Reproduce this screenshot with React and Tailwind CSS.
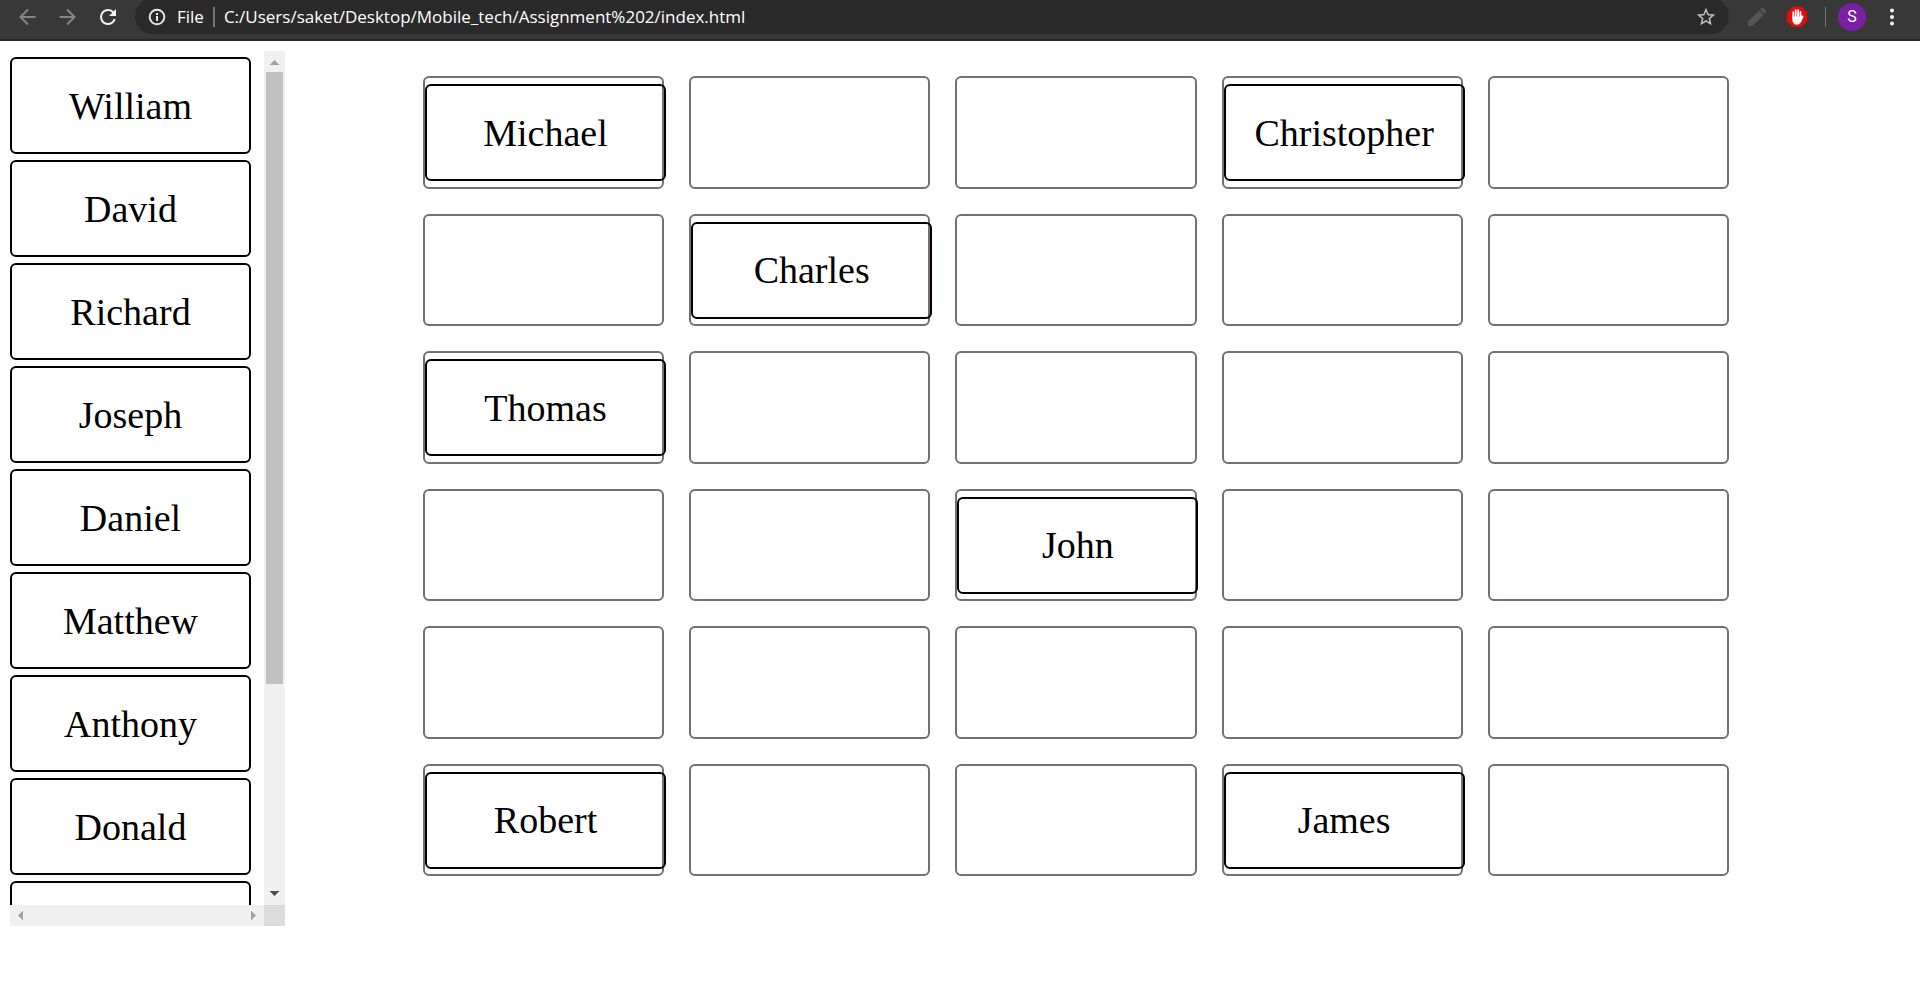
import React from "react";

const waiting = ["William", "David", "Richard", "Joseph", "Daniel", "Matthew", "Anthony", "Donald", ""];

const seats = [
  ["Michael", null, null, "Christopher", null],
  [null, "Charles", null, null, null],
  ["Thomas", null, null, null, null],
  [null, null, "John", null, null],
  [null, null, null, null, null],
  ["Robert", null, null, "James", null],
];

function NameCard({ name }) {
  return (
    <div
      draggable
      className="flex h-[97px] w-[241px] shrink-0 cursor-grab items-center justify-center rounded-md border-2 border-black text-[38px] leading-10 text-black"
    >
      {name}
    </div>
  );
}

function Arrow({ points, fill }) {
  return (
    <svg viewBox="0 0 21 21" className="size-[21px]" aria-hidden="true" shapeRendering="crispEdges">
      <polygon points={points} fill={fill} />
    </svg>
  );
}

function Toolbar() {
  return (
    <header className="flex h-[41px] shrink-0 items-start overflow-hidden border-b-2 border-[#272727] bg-[#383838] font-['Open_Sans',sans-serif] text-white">
      <nav className="flex h-[34px] w-[135px] shrink-0 items-center gap-4 pl-4">
        <button type="button" aria-label="Back" className="size-6">
          <svg viewBox="0 0 24 24" className="size-6" fill="none" stroke="#858585" strokeWidth="2">
            <path d="M19.5 12H5M12 4.5 4.5 12l7.5 7.5" />
          </svg>
        </button>
        <button type="button" aria-label="Forward" className="size-6">
          <svg viewBox="0 0 24 24" className="size-6" fill="none" stroke="#858585" strokeWidth="2">
            <path d="M3.5 12H18M11 4.5l7.5 7.5-7.5 7.5" />
          </svg>
        </button>
        <button type="button" aria-label="Reload" className="size-6">
          <svg viewBox="0 0 24 24" className="size-6" fill="#f1f1f1">
            <path d="M17.65 6.35A7.96 7.96 0 0 0 12 4a8 8 0 1 0 7.73 10h-2.08A6 6 0 1 1 12 6c1.66 0 3.14.69 4.22 1.78L13 11h7V4l-2.35 2.35z" />
          </svg>
        </button>
      </nav>

      <div className="-mt-0.5 flex h-9 min-w-0 flex-1 items-center rounded-full bg-[#2a2a2a] px-3 pt-0.5">
        <button type="button" aria-label="Page information" className="size-5">
          <svg viewBox="0 0 20 20" className="size-5" fill="none" stroke="#e8e8e8" strokeWidth="2">
            <circle cx="10" cy="10" r="7.3" />
            <path d="M10 9v5M10 6v2" />
          </svg>
        </button>
        <span className="ml-[10px] text-[17px] leading-5">File</span>
        <span className="mx-[9px] h-5 w-0.5 bg-[#757575]" />
        <input
          type="text"
          aria-label="Address"
          defaultValue="C:/Users/saket/Desktop/Mobile_tech/Assignment%202/index.html"
          className="min-w-0 flex-1 bg-transparent text-[17px] leading-5 text-white outline-none"
        />
        <button type="button" aria-label="Bookmark this page" className="size-[22px]">
          <svg viewBox="0 0 24 24" className="size-[22px]" fill="#c4c4c4">
            <path d="M22 9.24l-7.19-.62L12 2 9.19 8.63 2 9.24l5.46 4.73L5.82 21 12 17.27 18.18 21l-1.63-7.03L22 9.24zM12 15.4l-3.76 2.27 1-4.28-3.32-2.88 4.38-.38L12 6.1l1.71 4.04 4.38.38-3.32 2.88 1 4.28L12 15.4z" />
          </svg>
        </button>
      </div>

      <div className="flex h-[34px] w-[191px] shrink-0 items-center pl-4">
        <button type="button" aria-label="Pen extension" className="size-6">
          <svg viewBox="0 0 24 24" className="size-6" fill="#555555">
            <path d="M3 21v-4.500L14.200 5.300l4.500 4.500L7.500 21zM15.100 4.400l1.500-1.500a1.300 1.300 0 0 1 1.800 0l2.700 2.700a1.300 1.300 0 0 1 0 1.800l-1.500 1.500z" />
          </svg>
        </button>
        <button type="button" aria-label="Ad blocker" className="ml-4 size-6">
          <svg viewBox="0 0 24 24" className="size-6">
            <path d="M7.8 1.500h8.400L22.200 7.500v8.400l-6 6H7.800l-6-6V7.500z" fill="#e40d0d" />
            <g fill="none" stroke="#fff" strokeWidth="1.8" strokeLinecap="round" strokeLinejoin="round">
              <path d="M8.300 13V7.200M10.700 12V5.200M13.100 12V5.200M15.400 13V7" />
              <path d="M8.300 12.500h7.100l1.800-1.300.4.500-2.600 5.500-1.700 1.500h-3l-2-2.500z" fill="#fff" />
            </g>
          </svg>
        </button>
        <span className="ml-4 h-5 w-px bg-[#757575]" />
        <button
          type="button"
          aria-label="Profile"
          className="ml-3 flex size-7 items-center justify-center rounded-full bg-[#7b1fa2] font-[Roboto,sans-serif] text-base"
        >
          S
        </button>
        <button type="button" aria-label="Menu" className="ml-[14px] size-6">
          <svg viewBox="0 0 24 24" className="size-6" fill="#f1f1f1">
            <circle cx="12" cy="5.5" r="2" />
            <circle cx="12" cy="12" r="2" />
            <circle cx="12" cy="18.5" r="2" />
          </svg>
        </button>
      </div>
    </header>
  );
}

function NameList() {
  return (
    <aside className="grid w-[275px] shrink-0 grid-cols-[1fr_21px] grid-rows-[1fr_21px]">
      <div className="flex min-h-0 flex-col gap-1.5 overflow-auto pt-1.5 [scrollbar-width:none]">
        {waiting.map((name, i) => (
          <NameCard key={i} name={name} />
        ))}
      </div>
      <div className="flex min-h-0 flex-col bg-[#f0f0f0]">
        <button type="button" aria-label="Scroll up" className="size-[21px]">
          <Arrow points="6,14 15,14 10.5,9" fill="#a3a3a3" />
        </button>
        <div className="grid flex-1 grid-rows-[49fr_16fr] px-0.5">
          <div className="bg-[#c1c1c1]" />
        </div>
        <button type="button" aria-label="Scroll down" className="size-[21px]">
          <Arrow points="6,7 15,7 10.5,12" fill="#505050" />
        </button>
      </div>
      <div className="flex justify-between bg-[#f0f0f0]">
        <button type="button" aria-label="Scroll left" className="size-[21px]">
          <Arrow points="13,6 13,15 8,10.5" fill="#a3a3a3" />
        </button>
        <button type="button" aria-label="Scroll right" className="size-[21px]">
          <Arrow points="8,6 8,15 13,10.5" fill="#a3a3a3" />
        </button>
      </div>
      <div className="bg-[#dcdcdc]" />
    </aside>
  );
}

export default function App() {
  return (
    <div className="flex h-screen flex-col bg-white font-['Liberation_Serif',serif]">
      <Toolbar />
      <div className="flex min-h-0 flex-1 pt-[10px] pb-14 pl-[10px]">
        <NameList />
        <main className="grid flex-1 grid-cols-5 grid-rows-6 gap-[25px] pt-[25px] pr-[191px] pb-[50px] pl-[138px]">
          {seats.flat().map((name, i) => (
            <div key={i} className="min-w-0 rounded-md border-2 border-[#766e70] pt-1.5">
              {name && <NameCard name={name} />}
            </div>
          ))}
        </main>
      </div>
    </div>
  );
}
